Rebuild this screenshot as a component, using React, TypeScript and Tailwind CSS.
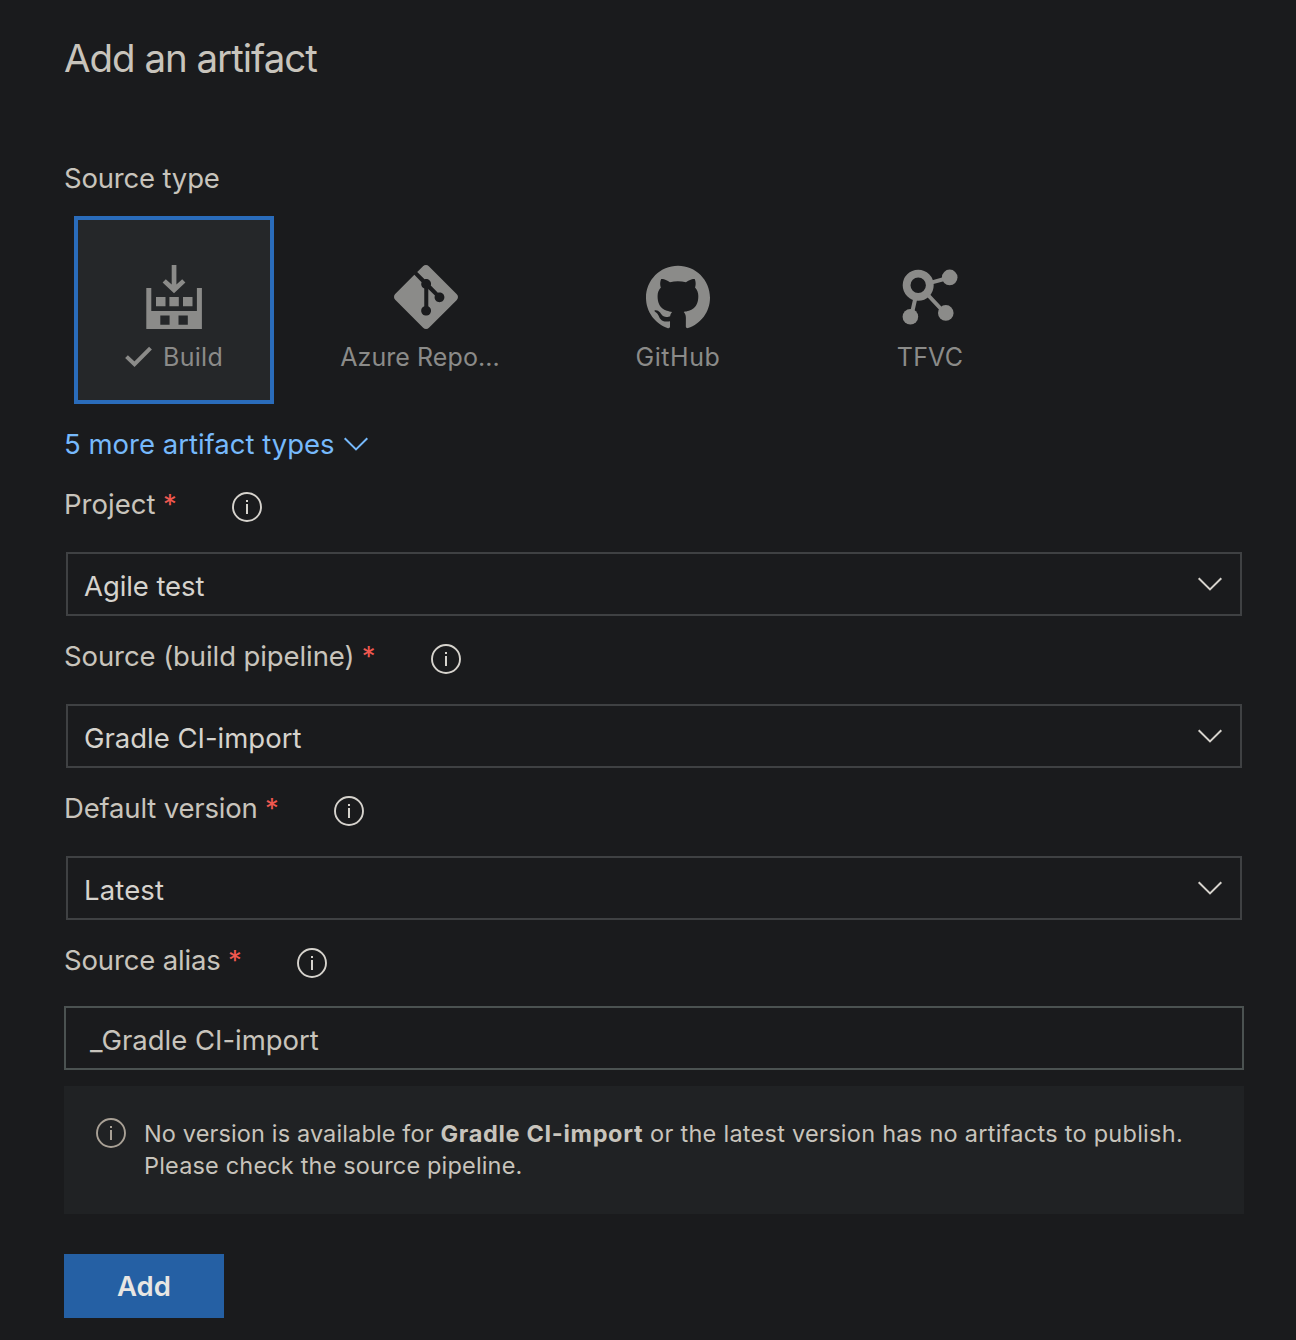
import React from "react";
import { SiGit, SiGithub } from "react-icons/si";

function Chevron({ className }: { className: string }) {
  return (
    <svg className={className} width="26" height="16" viewBox="0 0 26 16" fill="none" stroke="currentColor" strokeWidth="2">
      <path d="M1.7 2.2 13 13.4 24.3 2.2" />
    </svg>
  );
}

function InfoIcon({ className }: { className: string }) {
  return (
    <svg className={className} width="30" height="30" viewBox="0 0 30 30" fill="none" stroke="currentColor">
      <circle cx="15" cy="15" r="14" strokeWidth="1.9" />
      <path d="M15 12V22M15 8V10.1" strokeWidth="2" />
    </svg>
  );
}

function BuildIcon() {
  return (
    <svg width="64" height="64" viewBox="0 0 64 64" fill="currentColor">
      <path d="M29.7 0h4.7v19.5l5.8-5.3 3.2 3.2L32 28.2 20.6 17.4l3.2-3.2 5.9 5.3z" />
      <path d="M14 32h9.5v9.3H14zM27.4 32h9.4v9.3h-9.4zM41 32h9.5v9.3H41z" />
      <path fillRule="evenodd" d="M4.3 23h5v23h45.6V23h5v41H4.3zM18.3 50.5v9.3h9.3v-9.3zM36.5 50.5v9.3h9.3v-9.3z" />
    </svg>
  );
}

function TfvcIcon() {
  return (
    <svg width="64" height="64" viewBox="0 0 64 64" fill="currentColor" stroke="currentColor">
      <circle cx="20.2" cy="20.2" r="11.6" fill="none" strokeWidth="7.8" />
      <path d="M33 17.6 50 13M29.5 29.5 44 45M17.4 33 14 48" strokeWidth="4" />
      <g stroke="none">
        <circle cx="51.7" cy="12.4" r="7.8" />
        <circle cx="47.8" cy="47.9" r="7.8" />
        <circle cx="12.4" cy="51.8" r="7.8" />
      </g>
    </svg>
  );
}

function Field({ label, tracking, children }: { label: string; tracking: string; children: React.ReactNode }) {
  return (
    <div className="flex h-[152px] flex-col">
      <div className="flex h-10 text-[27.5px] leading-10 text-[#c8c4bc]">
        <span className={`whitespace-pre ${tracking}`}>{label}</span>
        <span className="ml-[7.4px] w-3.5 text-[#f0584f]">*</span>
        <InfoIcon className="ml-[55px] mt-2 text-[#d6d3cd]" />
      </div>
      {children}
    </div>
  );
}

function Select({ value, tracking }: { value: string; tracking: string }) {
  return (
    <div className="mx-0.5 mt-7 flex h-16 items-center justify-between border-2 border-[#3f4143] pl-4 pr-[17px] text-[27.5px] text-[#d6d3cd]">
      <span className={`mt-1 leading-10 ${tracking}`}>{value}</span>
      <Chevron className="text-[#d6d3cd]" />
    </div>
  );
}

export default function App() {
  return (
    <main className="h-[1340px] w-[1296px] overflow-hidden bg-[#1a1b1d] pl-16 pr-[52px] pt-[34px] font-['Inter',sans-serif] text-[#c8c4bc]">
      <h1 className="h-[124px] text-[38.5px] leading-[48px] tracking-[-1.03px]">Add an artifact</h1>
      <h2 className="h-[58px] text-[27.5px] leading-10 tracking-[-0.18px]">Source type</h2>

      <div className="ml-2.5 flex h-[188px] gap-[52px] text-[25px] leading-8 text-[#8b8b89]">
        <div className="flex w-[200px] flex-col items-center border-4 border-[#2a6cbb] bg-[#252729] pt-[45px]">
          <BuildIcon />
          <div className="mt-3 flex items-center">
            <svg className="mr-2.5" width="28" height="22" viewBox="0 0 28 22" fill="none" stroke="currentColor" strokeWidth="4">
              <path d="M1.5 10.6 9.5 18.2 25.5 2.1" />
            </svg>
            <span className="tracking-[0.3px]">Build</span>
          </div>
        </div>
        <div className="flex w-[200px] flex-col items-center pt-[49px]">
          <SiGit size={64} />
          <span className="mr-3 mt-3 whitespace-nowrap tracking-[0.07px]">Azure Repo...</span>
        </div>
        <div className="flex w-[200px] flex-col items-center pt-[49px]">
          <SiGithub size={64} />
          <span className="mt-3 tracking-[0.55px]">GitHub</span>
        </div>
        <div className="flex w-[200px] flex-col items-center pt-[49px]">
          <TfvcIcon />
          <span className="mt-3 tracking-[0.2px]">TFVC</span>
        </div>
      </div>

      <div className="mt-5 flex h-[60px] text-[27.5px] leading-10 text-[#76b9fb]">
        <span className="tracking-[0px]">5 more artifact types</span>
        <Chevron className="ml-[8.3px] mt-3" />
      </div>

      <Field label="Project" tracking="tracking-[0.03px]">
        <Select value="Agile test" tracking="tracking-[-0.08px]" />
      </Field>
      <Field label="Source (build pipeline)" tracking="tracking-[-0.09px]">
        <Select value="Gradle CI-import" tracking="tracking-[-0.01px]" />
      </Field>
      <Field label="Default version" tracking="tracking-[-0.18px]">
        <Select value="Latest" tracking="tracking-[0.15px]" />
      </Field>
      <Field label="Source alias" tracking="tracking-[-0.16px]">
        <div className="mt-[26px] flex h-16 items-center border-2 border-[#4b5251] pl-6 text-[27.5px]">
          <span className="mt-1 leading-10 tracking-[-0.01px]">_Gradle CI-import</span>
        </div>
      </Field>

      <div className="-mt-1.5 flex h-32 bg-[#202224] pl-8 pt-8 text-[23.5px] leading-8">
        <InfoIcon className="text-[#a9a196]" />
        <p className="ml-[18px] whitespace-nowrap tracking-[0.17px]">
          <span className="tracking-[0.13px]">No version is available for </span>
          <b className="font-bold tracking-[0.68px]">Gradle CI-import</b>
          <span className="tracking-[0.27px]"> or the latest version has no artifacts to publish.</span>
          <br />
          Please check the source pipeline.
        </p>
      </div>

      <button className="mt-10 block h-16 w-40 bg-[#2560a4] text-[27.5px] font-semibold leading-[64px] text-[#e8e6e3]">Add</button>
    </main>
  );
}
